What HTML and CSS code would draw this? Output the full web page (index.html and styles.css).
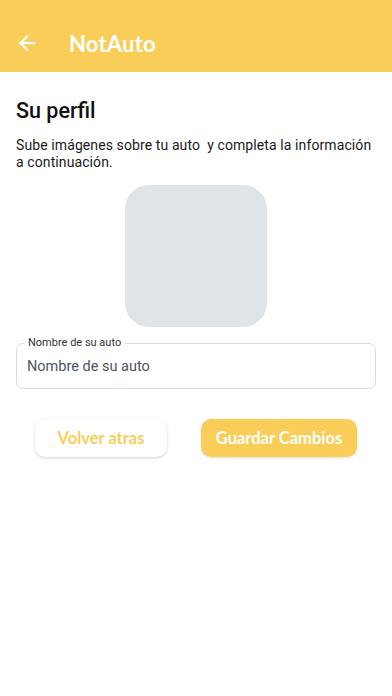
FILE: index.html
```html
<!DOCTYPE html>
<html lang="es">
<head>
<meta charset="utf-8">
<link rel="stylesheet" href="styles.css">
</head>
<body>
<header class="appbar">
  <svg class="back" width="20" height="20" viewBox="0 0 20 20" fill="none" stroke="#fff" stroke-width="2.2" stroke-linecap="square">
    <path d="M17 10H3.5"/>
    <path d="M10 3.5L3.5 10L10 16.5"/>
  </svg>
  <h1 class="brand">NotAuto</h1>
</header>
<main class="content">
  <h2 class="title">Su perfil</h2>
  <p class="desc">Sube imágenes sobre tu auto&nbsp; y completa la información a continuación.</p>
  <div class="photo-wrap"><div class="photo"></div></div>
  <label class="field">
    <span class="field-label">Nombre de su auto</span>
    <span class="field-input">Nombre de su auto</span>
  </label>
  <div class="actions">
    <button class="btn btn-ghost">Volver atras</button>
    <button class="btn btn-primary">Guardar Cambios</button>
  </div>
</main>
</body>
</html>
```
FILE: styles.css
```css
* { box-sizing: border-box; }
html, body { margin: 0; padding: 0; background: #fff; }
body {
  font-family: "Roboto", "Noto Sans", sans-serif;
  color: #111;
  width: 392px;
  height: 696px;
}
.appbar {
  height: 72px;
  background: #F9CE58;
  display: flex;
  align-items: center;
  padding: 14px 0 0 17px;
}
.back { display: block; }
.brand {
  margin: 0 0 0 32px;
  font-family: "Lato", sans-serif;
  font-weight: 700;
  font-size: 22px;
  color: #fff;
  letter-spacing: 0.2px;
}
.content { padding: 0 16px; }
.title {
  margin: 25px 0 0;
  font-size: 21.5px;
  font-weight: 500;
  line-height: 28px;
  color: #111;
}
.desc {
  margin: 12px 0 0;
  font-size: 14px;
  line-height: 17px;
  color: #1a1a1a;
  letter-spacing: 0.1px;
}
.photo-wrap { display: flex; justify-content: center; margin-top: 14px; }
.photo {
  width: 142px;
  height: 142px;
  border-radius: 24px;
  background: #E0E3E8;
}
.field {
  position: relative;
  margin-top: 16px;
  height: 46px;
  border: 1.5px solid #D9DCE1;
  border-radius: 7px;
  padding: 0 10px;
  display: flex;
  align-items: center;
}
.field-label {
  position: absolute;
  top: -8px;
  left: 7px;
  padding: 0 4px;
  background: #fff;
  font-size: 11px;
  line-height: 14px;
  color: #333;
}
.field-input {
  font-size: 14.5px;
  color: #4B5563;
}
.actions {
  display: flex;
  justify-content: space-between;
  padding: 0 19px;
  margin-top: 30px;
}
.btn {
  height: 38px;
  border: 0;
  border-radius: 10px;
  font-family: "Lato", sans-serif;
  font-weight: 700;
  font-size: 16.5px;
  cursor: pointer;
}
.btn-ghost {
  width: 132px;
  background: #fff;
  color: #F9CE58;
  box-shadow: 0 1px 3px rgba(0,0,0,0.18);
}
.btn-primary {
  width: 156px;
  background: #F9CE58;
  color: #fff;
  box-shadow: 0 1px 3px rgba(0,0,0,0.12);
}
```
